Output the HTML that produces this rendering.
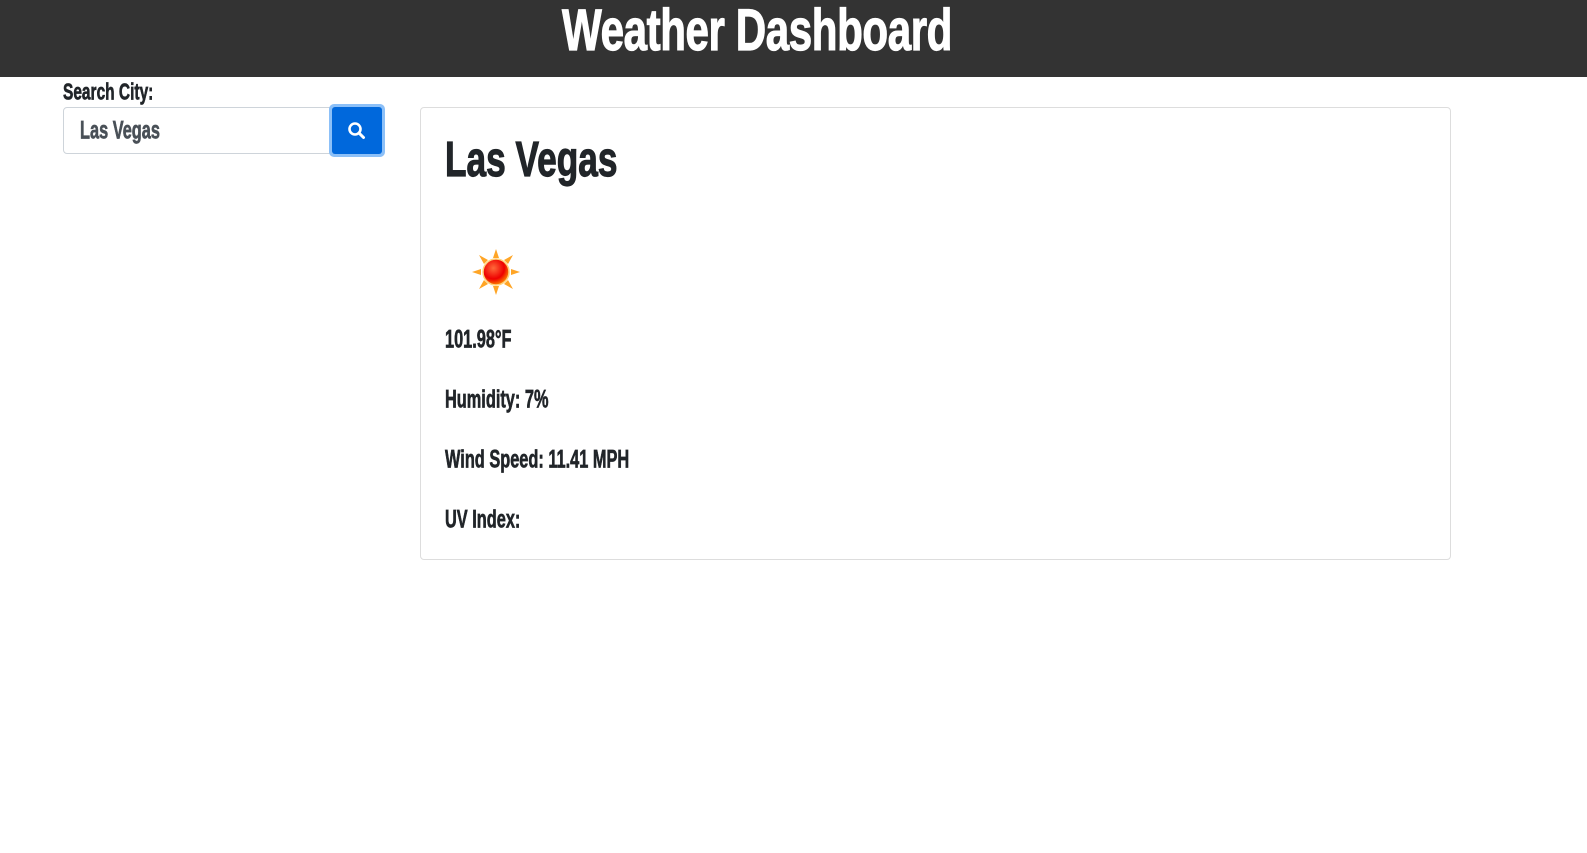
<!DOCTYPE html>
<html><head><style>
body{margin:0;background:#fff;font-family:"Liberation Sans Narrow","Liberation Sans",sans-serif;font-weight:bold;color:#212529;}
.t{display:inline-block;transform:scale(0.86,1.3);transform-origin:0 50%;white-space:nowrap;-webkit-text-stroke:0.5px currentColor}
header{height:77px;background:#333;position:relative}
header .t{position:absolute;left:562px;top:-3px;color:#fff;font-size:49px;transform:scale(0.86,1.2);transform-origin:0 0;letter-spacing:-0.5px;-webkit-text-stroke:1px #fff}
.abs{position:absolute}
</style></head><body>
<header><span class="t">Weather Dashboard</span></header>
<span class="t abs" style="left:63px;top:82px;font-size:18px">Search City:</span>
<div class="abs" style="left:63px;top:107px;width:265px;height:45px;border:1px solid #ced4da;border-radius:4px 0 0 4px"></div>
<span class="t abs" style="left:80px;top:121px;font-size:19px;color:#495057">Las Vegas</span>
<div class="abs" style="left:329px;top:104px;width:56px;height:53px;background:#8cc0f8;border-radius:5px"></div>
<div class="abs" style="left:332px;top:107px;width:50px;height:47px;background:#0068dc;border-radius:3px"></div>
<svg class="abs" style="left:347px;top:121px" width="20" height="20" viewBox="0 0 20 20"><circle cx="8" cy="8" r="5.5" fill="none" stroke="#fff" stroke-width="2.6"/><line x1="12" y1="12" x2="16.5" y2="16.5" stroke="#fff" stroke-width="3" stroke-linecap="round"/></svg>
<div class="abs" style="left:420px;top:107px;width:1029px;height:451px;border:1px solid #ddd;border-radius:4px"></div>
<span class="t abs" style="left:445px;top:136px;font-size:43px;transform:scale(0.82,1.15);-webkit-text-stroke:1px #212529">Las Vegas</span>
<svg class="abs" style="left:471px;top:248px" width="50" height="48" viewBox="0 0 50 48">
<defs><radialGradient id="g" cx="0.4" cy="0.35" r="0.7"><stop offset="0" stop-color="#ff6a3a"/><stop offset="0.6" stop-color="#ee0000"/><stop offset="1" stop-color="#ff9a00"/></radialGradient></defs>
<g fill="#ffa526">
<polygon points="25,1 28,10 22,10"/><polygon points="25,47 28,38 22,38"/><polygon points="1,24 10,21 10,27"/><polygon points="49,24 40,21 40,27"/>
<polygon points="8,7 17,12 13,16"/><polygon points="42,7 33,12 37,16"/><polygon points="8,41 17,36 13,32"/><polygon points="42,41 33,36 37,32"/></g>
<circle cx="25" cy="24" r="13" fill="url(#g)" stroke="#ffd27a" stroke-width="1.5"/></svg>
<span class="t abs" style="left:445px;top:330px;font-size:19px">101.98°F</span>
<span class="t abs" style="left:445px;top:390px;font-size:19px">Humidity: 7%</span>
<span class="t abs" style="left:445px;top:450px;font-size:19px">Wind Speed: 11.41 MPH</span>
<span class="t abs" style="left:445px;top:510px;font-size:19px">UV Index:</span>
</body></html>
